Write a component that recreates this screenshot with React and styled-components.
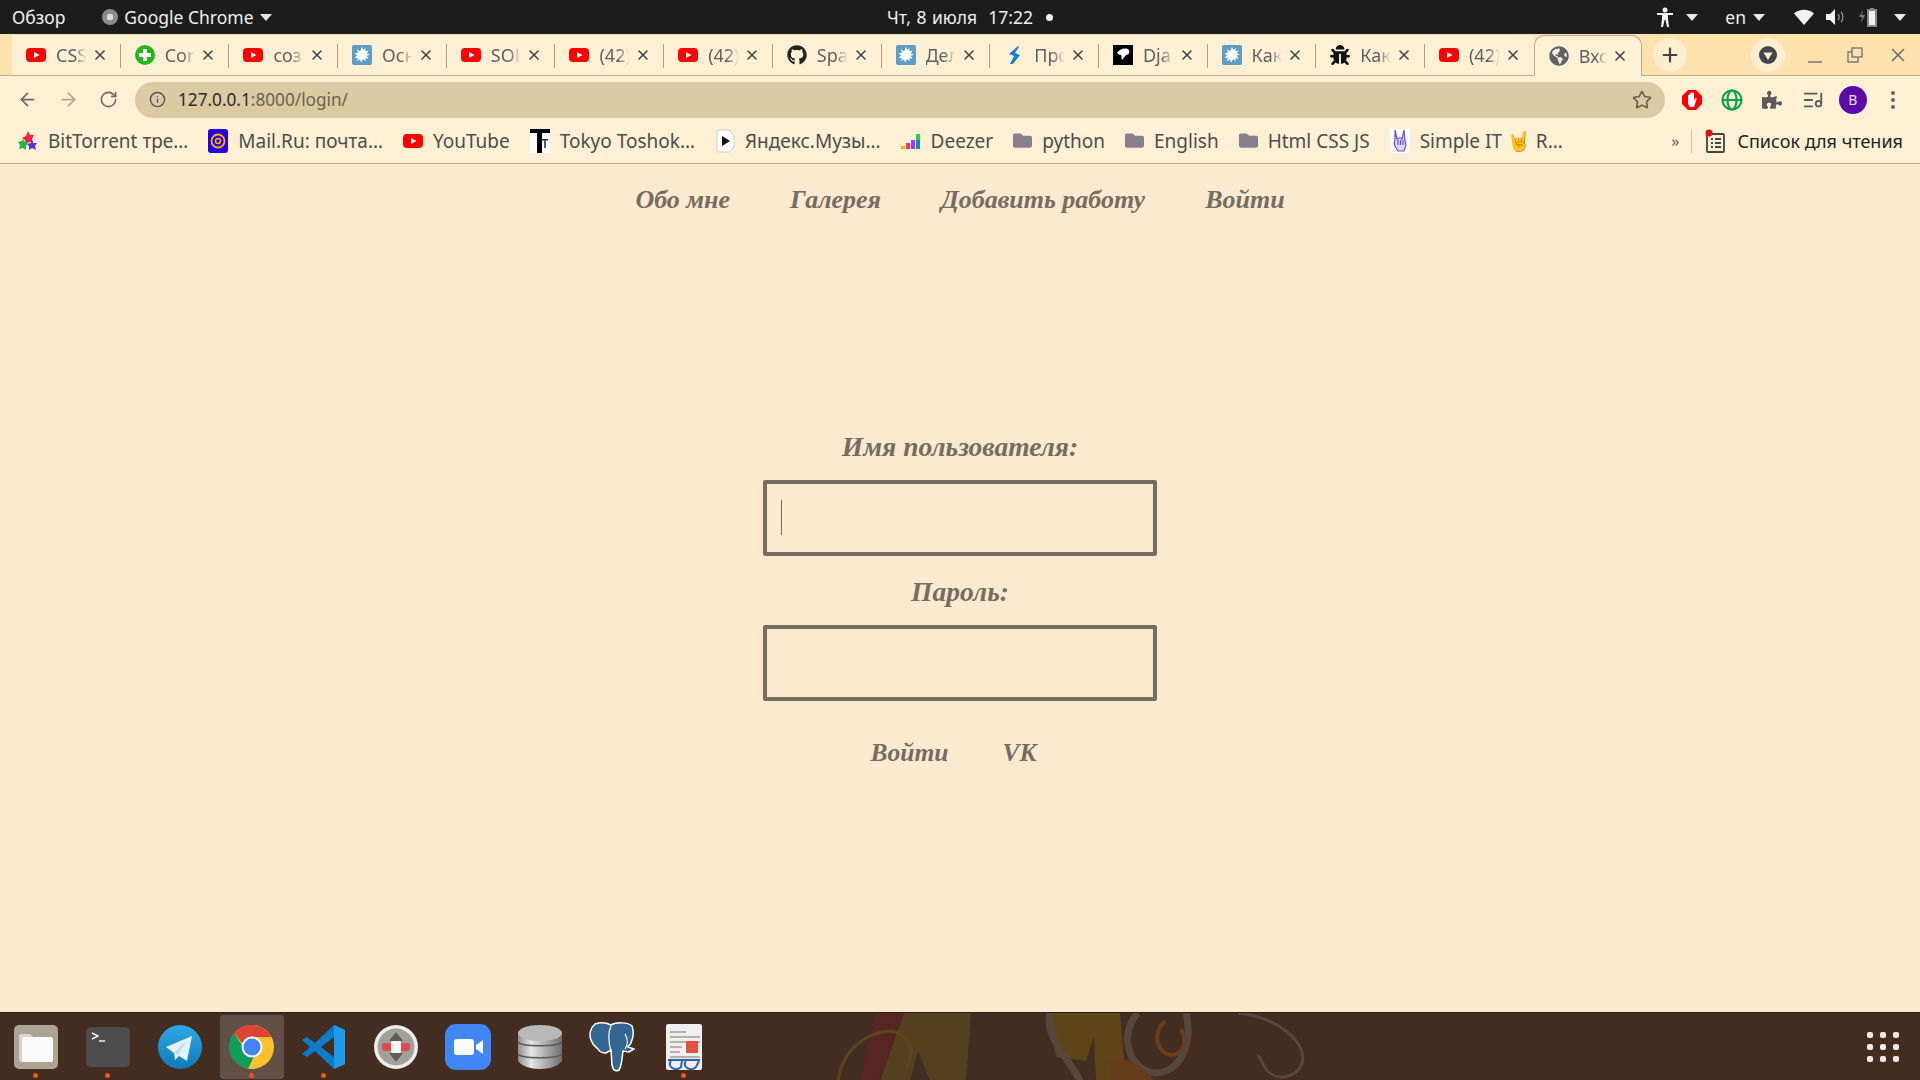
import React from "react";
import styled, { createGlobalStyle } from "styled-components";
import { ArrowLeft, ArrowRight, RotateCw, Info, Star, X, Plus, ListMusic } from "lucide-react";
import { FaGithub, FaBug, FaPuzzlePiece, FaGlobeAmericas, FaFolder } from "react-icons/fa";

const UI_FONT = `"Noto Sans", "Open Sans", sans-serif`;
const SCRIPT_FONT = `"Liberation Serif", "DejaVu Serif", serif`;

const GlobalStyle = createGlobalStyle`
  html, body { margin: 0; padding: 0; height: 100%; overflow: hidden; background: #fbe9d0; }
  * { box-sizing: border-box; }
`;

const Screen = styled.div`
  display: flex;
  flex-direction: column;
  width: 1920px;
  height: 1080px;
  overflow: hidden;
  font-family: ${UI_FONT};
`;

/* ---- gnome top bar ---- */
const TopBar = styled.header`
  display: grid;
  grid-template-columns: 1fr auto 1fr;
  align-items: center;
  height: 34px;
  padding: 0 12px;
  background: #1c1c1c;
  color: #eef0f0;
  font-size: 17.5px;
`;
const TopLeft = styled.div`
  display: flex;
  align-items: center;
`;
const AppMenu = styled.div`
  display: flex;
  align-items: center;
  gap: 6px;
  margin-left: 37px;
`;
const Clock = styled.div`
  display: flex;
  align-items: center;
  gap: 13px;
  padding-left: 20px;
  word-spacing: 1px;
`;
const Dot = styled.span`
  width: 7px;
  height: 7px;
  border-radius: 50%;
  background: #f4f4f4;
`;
const TopRight = styled.div`
  display: flex;
  align-items: center;
  justify-content: flex-end;
  gap: 12px;
  padding-right: 2px;
`;
const Caret = styled.span`
  width: 0;
  height: 0;
  margin-left: ${(p) => p.$gap || 0}px;
  border-left: 6px solid transparent;
  border-right: 6px solid transparent;
  border-top: 7px solid #e8e8e8;
`;
const Lang = styled.span`
  margin-left: 15px;
`;
const TraySpacer = styled.span`
  width: 5px;
`;

/* ---- chrome tab strip ---- */
const TabStrip = styled.div`
  display: flex;
  align-items: flex-end;
  height: 42px;
  padding-left: 12px;
  background: #fde2ae;
  border-bottom: 1px solid #b9ab92;
`;
const Tab = styled.div`
  position: relative;
  display: flex;
  align-items: center;
  flex: none;
  width: 108.7px;
  height: 41px;
  margin-bottom: -1px;
  padding: 0 13px 0 14px;
  background: #fdf0d5;
  color: #5f5f5f;
  font-size: 18px;
  border-radius: ${(p) => (p.$active ? "10px 10px 0 0" : "0")};
  border: ${(p) => (p.$active ? "1px solid #b9ab92" : "0")};
  border-bottom: ${(p) => (p.$active ? "1px solid #fdf0d5" : "1px solid #b9ab92")};
  &::after {
    content: "";
    display: ${(p) => (p.$last ? "none" : "block")};
    position: absolute;
    right: 0;
    top: 9px;
    height: 24px;
    width: 1px;
    background: #aea08a;
  }
`;
const TabTitle = styled.span`
  flex: 1;
  min-width: 0;
  margin: 0 2px 0 10px;
  overflow: hidden;
  white-space: nowrap;
  -webkit-mask-image: linear-gradient(90deg, #000 55%, transparent 90%);
  mask-image: linear-gradient(90deg, #000 55%, transparent 90%);
`;
const RoundButton = styled.div`
  display: flex;
  align-items: center;
  justify-content: center;
  flex: none;
  width: 34px;
  height: 34px;
  margin-left: ${(p) => p.$left}px;
  margin-bottom: 3px;
  border-radius: 50%;
  background: #fdeecf;
  color: #444;
`;
const WindowControls = styled.div`
  display: flex;
  align-items: center;
  gap: 24px;
  margin-left: 22px;
  margin-bottom: 3px;
  height: 34px;
  color: #6a6a6a;
`;

/* ---- toolbar ---- */
const Toolbar = styled.div`
  display: flex;
  align-items: center;
  height: 47px;
  padding: 0 0 0 17px;
  background: #fdf0d5;
  color: #6a6a6a;
`;
const NavIcons = styled.div`
  display: flex;
  align-items: center;
  gap: 20px;
  width: 118px;
`;
const Omnibox = styled.div`
  display: flex;
  align-items: center;
  width: 1530px;
  height: 36px;
  padding: 0 13px 0 14px;
  border-radius: 18px;
  background: #dccaa3;
  font-size: 17.2px;
  color: #6a6250;
`;
const Host = styled.span`
  margin-left: 12px;
  color: #2b2b2b;
`;
const ExtIcons = styled.div`
  display: grid;
  grid-auto-flow: column;
  grid-auto-columns: 40.2px;
  justify-items: center;
  align-items: center;
  margin-left: 7px;
`;
const Avatar = styled.div`
  display: flex;
  align-items: center;
  justify-content: center;
  width: 28px;
  height: 28px;
  border-radius: 50%;
  background: #5b0aa8;
  color: #e9dcf5;
  font-size: 14px;
`;
const Kebab = styled.div`
  display: flex;
  flex-direction: column;
  gap: 3px;
  i {
    width: 4px;
    height: 4px;
    border-radius: 50%;
    background: #666;
  }
`;

/* ---- bookmarks ---- */
const BookmarksBar = styled.nav`
  display: flex;
  align-items: center;
  gap: 20px;
  height: 41px;
  padding: 0 17px 5px 18px;
  background: #fdf0d5;
  border-bottom: 1px solid #b9ab92;
  color: #4d4d4d;
  font-size: 19px;
`;
const Bookmark = styled.div`
  display: flex;
  align-items: center;
  gap: 10px;
  white-space: nowrap;
`;
const BookmarksEnd = styled.div`
  display: flex;
  align-items: center;
  margin-left: auto;
  color: #222;
  font-size: 18px;
`;
const Chevrons = styled.span`
  color: #666;
  font-size: 16px;
`;
const Divider = styled.span`
  width: 1px;
  height: 24px;
  margin: 0 13px 0 12px;
  background: #cfc3ab;
`;

/* ---- the page ---- */
const Page = styled.main`
  flex: 1;
  display: flex;
  flex-direction: column;
  align-items: center;
  background: #fbe9d0;
  color: #756d60;
  font-family: ${SCRIPT_FONT};
  font-style: italic;
  font-weight: 700;
`;
const SiteNav = styled.nav`
  display: flex;
  gap: 60px;
  margin-top: 18px;
  font-size: 26px;
  line-height: 36px;
`;
const LoginForm = styled.form`
  display: flex;
  flex-direction: column;
  align-items: center;
  margin-top: 211px;
`;
const Label = styled.label`
  font-size: 27.5px;
  line-height: 36px;
  margin: ${(p) => (p.$second ? "18px" : "0")} 0 15px;
`;
const Field = styled.div`
  position: relative;
`;
const Input = styled.input`
  display: block;
  width: 394px;
  height: 76px;
  border: 4px solid #756d60;
  border-radius: 2px;
  background: transparent;
  outline: none;
`;
const TextCaret = styled.span`
  position: absolute;
  left: 18px;
  top: 20px;
  width: 1px;
  height: 35px;
  background: #756d60;
`;
const FormActions = styled.div`
  display: flex;
  gap: 54px;
  margin-top: 34px;
  padding-right: 13px;
  font-size: 25.5px;
  line-height: 36px;
`;

/* ---- dock ---- */
const Dock = styled.footer`
  position: relative;
  display: flex;
  align-items: center;
  height: 68px;
  background: #432c20;
  border-top: 1px solid #2c1c13;
  overflow: hidden;
`;
const Wallpaper = styled.svg`
  position: absolute;
  left: 820px;
  top: 0;
`;
const DockItem = styled.div`
  position: relative;
  display: flex;
  align-items: center;
  justify-content: center;
  width: 72px;
  height: 64px;
  &::before {
    content: "";
    display: ${(p) => (p.$active ? "block" : "none")};
    position: absolute;
    inset: 0 4px;
    border-radius: 3px;
    background: rgba(255, 255, 255, 0.17);
  }
  svg {
    position: relative;
  }
  &::after {
    content: "";
    display: ${(p) => (p.$running ? "block" : "none")};
    position: absolute;
    bottom: 1px;
    left: 33px;
    width: 5px;
    height: 5px;
    border-radius: 50%;
    background: #e95420;
  }
`;
const AppsGrid = styled.div`
  position: absolute;
  right: 21px;
  top: 19px;
  display: grid;
  grid-template-columns: repeat(3, 6px);
  gap: 6px 7px;
  i {
    height: 6px;
    border-radius: 2px;
    background: #eee;
  }
`;

/* ---- favicons and app icons ---- */
const YouTube = () => (
  <svg width="20" height="20" viewBox="0 0 20 20">
    <rect x="0" y="3" width="20" height="14" rx="4" fill="#f00" />
    <path d="M8 7l5.5 3L8 13z" fill="#fff" />
  </svg>
);
const GreenPlus = () => (
  <svg width="20" height="20" viewBox="0 0 20 20">
    <circle cx="10" cy="10" r="10" fill="#22b61c" />
    <path d="M8 4h4v4h4v4h-4v4H8v-4H4V8h4z" fill="#fff" />
  </svg>
);
const Splash = () => (
  <svg width="20" height="20" viewBox="0 0 20 20">
    <rect width="20" height="20" rx="2" fill="#5c9ec4" />
    <path d="M10 2l1.300 3 2.500-2-.6 3.300 3.500-.8-2 2.700 3 1.300-3 1.300 1.800 3-3.200-.9.400 3.400-2.400-2.200L9 17.500 8 14.300 5 16l1-3.300-3.300.2L5 10.300 2.500 8.300l3.300-.3L5 4.500l3 1.700z" fill="#fff" />
  </svg>
);
const Bolt = () => (
  <svg width="20" height="20" viewBox="0 0 20 20">
    <path d="M14 1L5 9l5 2-4 8 3 0 7-9-5-2 4-6z" fill="#1a7fe0" />
  </svg>
);
const DjangoMark = () => (
  <svg width="20" height="20" viewBox="0 0 20 20">
    <rect width="20" height="20" fill="#000" />
    <path d="M4 8c2-4 9-6 12-3 1 2 0 5-3 5-1 2-3 3-4 5-1-2 0-4-1-5-2 0-3-1-4-2z" fill="#fff" />
  </svg>
);
const Rainbow = () => (
  <svg width="20" height="20" viewBox="0 0 20 20">
    <path d="M10 0l2 4 4 0-2 4 1 4-4-1-3 2-1-4-3-2 4-2z" fill="#e8264b" />
    <path d="M5 8l2 3 3 1-2 3 0 4-3-2-4 1 1-4-2-3 4-1z" fill="#27b34a" />
    <path d="M14 9l1 3 4 0-2 3 1 4-4-2-3 2 0-4-2-2 4-1z" fill="#5a2bd8" />
  </svg>
);
const MailRu = () => (
  <svg width="20" height="24" viewBox="0 0 20 24">
    <rect width="20" height="24" rx="3" fill="#2200e6" />
    <circle cx="10" cy="12" r="6.500" fill="none" stroke="#ffb300" strokeWidth="1.800" />
    <circle cx="10" cy="12" r="2.500" fill="none" stroke="#ffb300" strokeWidth="1.500" />
  </svg>
);
const TokyoMark = () => (
  <svg width="20" height="24" viewBox="0 0 20 24">
    <rect width="20" height="24" fill="#fff" />
    <path d="M0 0h20v4H12v20H7V4H0z" fill="#000" />
    <path d="M12 10h6v1.500h-2.200V19h-1.600v-7.500H12z" fill="#333" />
  </svg>
);
const YandexMusic = () => (
  <svg width="20" height="24" viewBox="0 0 20 24">
    <path d="M4 1h10l5 5v12l-5 5H4a2 2 0 0 1-2-2V3a2 2 0 0 1 2-2z" fill="#fff" stroke="#ccc" />
    <path d="M7 7l8 5-8 5z" fill="#111" />
  </svg>
);
const Deezer = () => (
  <svg width="20" height="20" viewBox="0 0 20 20">
    <rect x="0" y="15" width="4" height="3" fill="#ffae00" />
    <rect x="5" y="12" width="4" height="6" fill="#ff2f5f" />
    <rect x="10" y="9" width="4" height="9" fill="#a238ff" />
    <rect x="15" y="3" width="4" height="6" fill="#34c759" />
    <rect x="15" y="9" width="4" height="9" fill="#1c7fe0" />
  </svg>
);
const RockHand = () => (
  <svg width="20" height="24" viewBox="0 0 20 24">
    <rect width="20" height="24" fill="#fff" />
    <path d="M5 1l2 9 2-1 2 0 1 1 2-9 1 11 1 4-2 6H8l-3-5-1-3 1-3z" fill="#dcd6fa" stroke="#6a4fd8" strokeWidth="1.200" />
    <path d="M8 11v5M10.500 11v5M13 11v5" stroke="#6a4fd8" strokeWidth="1.200" />
  </svg>
);
const ReadingList = () => (
  <svg width="22" height="26" viewBox="0 0 22 26">
    <rect x="2" y="6" width="17" height="18" rx="1" fill="none" stroke="#444" strokeWidth="1.800" />
    <path d="M6 11h2M10 11h6M6 15h2M10 15h6M6 19h2M10 19h6" stroke="#444" strokeWidth="1.800" />
    <circle cx="4" cy="5" r="3.500" fill="#e00b0b" />
  </svg>
);
const StopHand = () => (
  <svg width="22" height="22" viewBox="0 0 22 22">
    <path d="M7 1h8l6 6v8l-6 6H7l-6-6V7z" fill="#f00" />
    <path d="M7 11V6h1.500v4-5.500H10v5-6h1.500v6-5.500H13v7l1.500-2 1.300.7L13 18H9l-2-3z" fill="#fff" />
  </svg>
);
const GreenGlobe = () => (
  <svg width="22" height="22" viewBox="0 0 22 22" fill="none" stroke="#12a150" strokeWidth="2.200">
    <circle cx="11" cy="11" r="9.500" />
    <ellipse cx="11" cy="11" rx="4.500" ry="9.500" />
    <path d="M1 11h20" />
  </svg>
);
const WifiIcon = () => (
  <svg width="20" height="16" viewBox="0 0 20 16">
    <path d="M0 4.500C5.500-.5 14.500-.5 20 4.500L10 16z" fill="#f2f2f2" />
  </svg>
);
const VolumeIcon = () => (
  <svg width="20" height="16" viewBox="0 0 20 16" fill="none">
    <path d="M0 5h4l5-5v16l-5-5H0z" fill="#f2f2f2" />
    <path d="M12 5c1.500 1.500 1.500 4.500 0 6M15 3c2.500 2.500 2.500 7.500 0 10" stroke="#999" strokeWidth="1.200" />
  </svg>
);
const BatteryIcon = () => (
  <svg width="24" height="20" viewBox="0 0 24 20">
    <path d="M5 3L1 10h3l-1 6 4-8H4z" fill="#777" />
    <path d="M12 1h4v1h3v18H9V2h3z" fill="#888" />
    <rect x="11" y="4" width="6" height="14" fill="#f2f2f2" />
  </svg>
);
const AccessIcon = () => (
  <svg width="16" height="20" viewBox="0 0 16 20" fill="#f2f2f2">
    <circle cx="8" cy="3" r="2.500" />
    <path d="M0 6h16v2h-5v4l1 8h-2l-1.500-7h-1L6 20H4l1-8V8H0z" />
  </svg>
);
const ChromeMini = () => (
  <svg width="16" height="16" viewBox="0 0 16 16">
    <circle cx="8" cy="8" r="8" fill="#8a8a8a" />
    <circle cx="8" cy="8" r="3.200" fill="#ddd" />
  </svg>
);
const SaveArrow = () => (
  <svg width="20" height="20" viewBox="0 0 20 20">
    <circle cx="10" cy="10" r="9" fill="#45454f" />
    <path d="M5.500 7.500h9L10 15z" fill="#fdeecf" />
  </svg>
);
const Minimize = () => (
  <svg width="16" height="18" viewBox="0 0 16 18">
    <path d="M1 16h14" stroke="#777" strokeWidth="1.500" />
  </svg>
);
const Restore = () => (
  <svg width="16" height="16" viewBox="0 0 16 16" fill="none" stroke="#777" strokeWidth="1.400">
    <rect x="5" y="1" width="10" height="9" />
    <path d="M5 5H1v10h10v-5" />
  </svg>
);

const FilesApp = () => (
  <svg width="46" height="46" viewBox="0 0 46 46">
    <rect x="1" y="1" width="44" height="44" rx="5" fill="#aba493" />
    <path d="M6 12a2 2 0 0 1 2-2h9l4 4h17a2 2 0 0 1 2 2v20a2 2 0 0 1-2 2H8a2 2 0 0 1-2-2z" fill="#d9d5cb" />
    <rect x="9" y="13" width="31" height="25" rx="2" fill="#fafafa" />
  </svg>
);
const TerminalApp = () => (
  <svg width="46" height="46" viewBox="0 0 46 46">
    <rect x="1" y="3" width="44" height="40" rx="5" fill="#4c4c4c" />
    <path d="M7 9l6 3-6 3" stroke="#eee" strokeWidth="1.500" fill="none" />
    <path d="M14 17h6" stroke="#eee" strokeWidth="1.500" />
  </svg>
);
const TelegramApp = () => (
  <svg width="44" height="46" viewBox="0 0 44 46">
    <defs>
      <linearGradient id="tg" x1="0" y1="0" x2="0" y2="1">
        <stop offset="0" stopColor="#2fa9e6" />
        <stop offset="1" stopColor="#0f7ab8" />
      </linearGradient>
    </defs>
    <ellipse cx="22" cy="23" rx="22" ry="22" fill="url(#tg)" />
    <path d="M8 23l26-11-5 25-8-5-4 4-1-7z" fill="#e4f1f9" />
    <path d="M16 29l13-13-9 15z" fill="#c0d9e8" />
  </svg>
);
const ChromeApp = () => (
  <svg width="46" height="46" viewBox="0 0 46 46">
    <circle cx="23" cy="23" r="22" fill="#fbc02d" />
    <path d="M23 1a22 22 0 0 1 19.500 12H23a10 10 0 0 0-9.500 7L5 8.500A22 22 0 0 1 23 1z" fill="#dc4437" />
    <path d="M5 8.500L14 23a10 10 0 0 0 11 9.800L19 44.600A22 22 0 0 1 5 8.500z" fill="#0f9d58" />
    <circle cx="23" cy="23" r="10.500" fill="#fff" />
    <circle cx="23" cy="23" r="8.500" fill="#4285f4" />
  </svg>
);
const VsCodeApp = () => (
  <svg width="44" height="46" viewBox="0 0 44 46">
    <path d="M32 1l11 5v34l-11 5L13 27l-8 6-5-3 8-7-8-7 5-3 8 6z" fill="#0a7cc8" />
    <path d="M32 1l11 5v34l-11 5z" fill="#1e9ceb" />
    <path d="M32 13L19 23l13 10z" fill="#432c20" />
  </svg>
);
const SafeEyesApp = () => (
  <svg width="46" height="46" viewBox="0 0 46 46">
    <circle cx="23" cy="23" r="22" fill="#eee" />
    <circle cx="23" cy="23" r="18.500" fill="#a2a197" />
    <path d="M23 8l7 9H16zM23 38l7-9H16z" fill="#5f5f58" />
    <rect x="9" y="19" width="28" height="8" rx="2" fill="#e04a4f" />
    <rect x="18" y="17" width="10" height="12" rx="2" fill="#f5f5f5" />
  </svg>
);
const ZoomApp = () => (
  <svg width="46" height="46" viewBox="0 0 46 46">
    <rect width="46" height="46" rx="11" fill="#4087f5" />
    <rect x="9" y="15" width="20" height="16" rx="3" fill="#fff" />
    <path d="M31 21l7-5v14l-7-5z" fill="#fff" />
  </svg>
);
const DatabaseApp = () => (
  <svg width="46" height="46" viewBox="0 0 46 46">
    <defs>
      <linearGradient id="db" x1="0" y1="0" x2="1" y2="0">
        <stop offset="0" stopColor="#8f8f8f" />
        <stop offset="0.3" stopColor="#e6e6e6" />
        <stop offset="1" stopColor="#6f6f6f" />
      </linearGradient>
    </defs>
    <path d="M1 36V8h44v28c0 4-10 9-22 9S1 40 1 36z" fill="url(#db)" />
    <path d="M1 18c3 5 41 5 44 0M1 30c3 5 41 5 44 0" fill="none" stroke="#5b5b5b" strokeWidth="1.500" />
    <ellipse cx="23" cy="9" rx="22" ry="8" fill="#b9b9b9" />
  </svg>
);
const ElephantApp = () => (
  <svg width="46" height="50" viewBox="0 0 46 50">
    <path d="M6 2c6-2 12-1 16 1 5-3 17-3 21 1 3 8 0 17-4 21l6 2-5 3-6-1c-1 6-1 14-4 19-4 2-6 0-7-5l-1-15-5 3c-4 0-7-2-8-4-2-2-5-3-7-9C0 13 1 6 6 2z" fill="#336791" stroke="#fff" strokeWidth="1.500" />
    <path d="M22 4c-3 6-3 14 0 26M36 12c3 5 3 11 0 15" fill="none" stroke="#fff" strokeWidth="1.200" />
  </svg>
);
const ReaderApp = () => (
  <svg width="36" height="46" viewBox="0 0 36 46">
    <rect width="36" height="46" rx="2" fill="#efefef" />
    <path d="M4 8h16M4 13h30M4 18h30M4 23h12M4 28h10M4 33h30" stroke="#b6b2a6" strokeWidth="2" />
    <rect x="20" y="17" width="12" height="12" fill="#e0513f" />
    <path d="M2 36h32M5 37a6 5 0 0 0 10 6l1-6M20 37a6 5 0 0 0 10 6l3-6" fill="none" stroke="#2f63a8" strokeWidth="2" />
  </svg>
);

const tabs = [
  { icon: <YouTube />, title: "CSS" },
  { icon: <GreenPlus />, title: "Cor" },
  { icon: <YouTube />, title: "соз" },
  { icon: <Splash />, title: "Осн" },
  { icon: <YouTube />, title: "SOL" },
  { icon: <YouTube />, title: "(42)" },
  { icon: <YouTube />, title: "(42)" },
  { icon: <FaGithub size={20} color="#222" />, title: "Spa" },
  { icon: <Splash />, title: "Дел" },
  { icon: <Bolt />, title: "Про" },
  { icon: <DjangoMark />, title: "Dja" },
  { icon: <Splash />, title: "Как" },
  { icon: <FaBug size={20} color="#111" />, title: "Как" },
  { icon: <YouTube />, title: "(42)" },
  { icon: <FaGlobeAmericas size={20} color="#5f6368" />, title: "Вхо", active: true },
];

const folder = <FaFolder size={19} color="#85808a" />;
const bookmarks = [
  { icon: <Rainbow />, title: "BitTorrent тре…" },
  { icon: <MailRu />, title: "Mail.Ru: почта…" },
  { icon: <YouTube />, title: "YouTube" },
  { icon: <TokyoMark />, title: "Tokyo Toshok…" },
  { icon: <YandexMusic />, title: "Яндекс.Музы…" },
  { icon: <Deezer />, title: "Deezer" },
  { icon: folder, title: "python" },
  { icon: folder, title: "English" },
  { icon: folder, title: "Html CSS JS" },
  { icon: <RockHand />, title: "Simple IT 🤘 R…" },
];

const dockApps = [
  { icon: <FilesApp />, running: true },
  { icon: <TerminalApp />, running: true },
  { icon: <TelegramApp /> },
  { icon: <ChromeApp />, running: true, active: true },
  { icon: <VsCodeApp />, running: true },
  { icon: <SafeEyesApp /> },
  { icon: <ZoomApp /> },
  { icon: <DatabaseApp /> },
  { icon: <ElephantApp /> },
  { icon: <ReaderApp />, running: true },
];

export default function App() {
  return (
    <Screen>
      <GlobalStyle />
      <TopBar>
        <TopLeft>
          Обзор
          <AppMenu>
            <ChromeMini />
            Google Chrome
            <Caret />
          </AppMenu>
        </TopLeft>
        <Clock>
          Чт, 8 июля&nbsp; 17:22
          <Dot />
        </Clock>
        <TopRight>
          <AccessIcon />
          <Caret $gap={1} />
          <Lang>en</Lang>
          <Caret $gap={-5} />
          <TraySpacer />
          <WifiIcon />
          <VolumeIcon />
          <BatteryIcon />
          <Caret />
        </TopRight>
      </TopBar>

      <TabStrip>
        {tabs.map((t, i) => (
          <Tab key={i} $active={t.active} $last={t.active || i === tabs.length - 2}>
            {t.icon}
            <TabTitle>{t.title}</TabTitle>
            <X size={16} strokeWidth={2.4} color="#444" />
          </Tab>
        ))}
        <RoundButton $left={11}>
          <Plus size={22} strokeWidth={2.4} />
        </RoundButton>
        <RoundButton $left={64}>
          <SaveArrow />
        </RoundButton>
        <WindowControls>
          <Minimize />
          <Restore />
          <X size={22} strokeWidth={1.6} />
        </WindowControls>
      </TabStrip>

      <Toolbar>
        <NavIcons>
          <ArrowLeft size={21} />
          <ArrowRight size={21} color="#b0a794" />
          <RotateCw size={19} />
        </NavIcons>
        <Omnibox>
          <Info size={17} color="#555" />
          <Host>127.0.0.1</Host>:8000/login/
          <Star size={20} style={{ marginLeft: "auto" }} />
        </Omnibox>
        <ExtIcons>
          <StopHand />
          <GreenGlobe />
          <FaPuzzlePiece size={20} color="#5a5a5a" />
          <ListMusic size={22} color="#5a5a5a" />
          <Avatar>B</Avatar>
          <Kebab>
            <i />
            <i />
            <i />
          </Kebab>
        </ExtIcons>
      </Toolbar>

      <BookmarksBar>
        {bookmarks.map((b) => (
          <Bookmark key={b.title}>
            {b.icon}
            {b.title}
          </Bookmark>
        ))}
        <BookmarksEnd>
          <Chevrons>»</Chevrons>
          <Divider />
          <Bookmark>
            <ReadingList />
            Список для чтения
          </Bookmark>
        </BookmarksEnd>
      </BookmarksBar>

      <Page>
        <SiteNav>
          <span>Обо мне</span>
          <span>Галерея</span>
          <span>Добавить работу</span>
          <span>Войти</span>
        </SiteNav>
        <LoginForm>
          <Label htmlFor="username">Имя пользователя:</Label>
          <Field>
            <Input id="username" type="text" />
            <TextCaret />
          </Field>
          <Label htmlFor="password" $second>
            Пароль:
          </Label>
          <Input id="password" type="password" />
          <FormActions>
            <span>Войти</span>
            <span>VK</span>
          </FormActions>
        </LoginForm>
      </Page>

      <Dock>
        <Wallpaper width="500" height="68" viewBox="0 0 500 68" fill="none">
          <path d="M56 0L40 68h18L84 0z" fill="#552622" />
          <path d="M84 0L60 68h30l8-30 12 30h36l5-68z" fill="#54401f" />
          <path d="M18 68C22 38 44 20 70 18c20 2 26 20 16 38" stroke="#5c4420" strokeWidth="3" />
          <path d="M228 0l8 44 30 4 8-24 2 44h30L300 0z" fill="#5e4519" />
          <path d="M318 0c-18 18-12 54 14 60 26 2 42-26 34-60" stroke="#55473c" strokeWidth="7" />
          <path d="M345 8c-14 12-8 34 8 34 12-2 14-16 8-26" stroke="#6a3d1c" strokeWidth="4" />
          <path d="M418 0c40 4 70 30 64 50-4 14-26 20-36 6l-8-14" stroke="#55473c" strokeWidth="3" />
          <path d="M230 0c-6 24 18 44 30 68" stroke="#55473c" strokeWidth="7" />
          <path d="M290 48c10-6 30 0 44 20h-44z" fill="#653c1a" />
        </Wallpaper>
        {dockApps.map((a, i) => (
          <DockItem key={i} $active={a.active} $running={a.running}>
            {a.icon}
          </DockItem>
        ))}
        <AppsGrid>
          {Array.from({ length: 9 }, (_, i) => (
            <i key={i} />
          ))}
        </AppsGrid>
      </Dock>
    </Screen>
  );
}
